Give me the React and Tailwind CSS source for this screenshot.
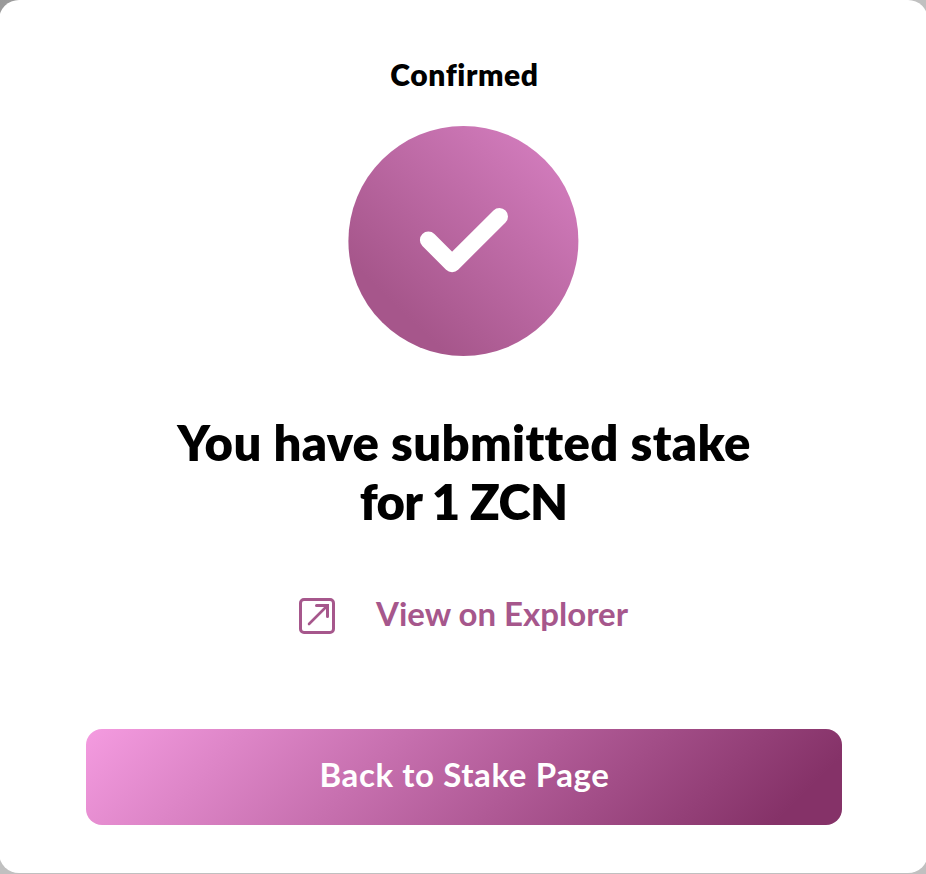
import React from "react";

const CheckBadge = () => (
	<svg className="block w-[231px] h-[230px] shrink-0" viewBox="0 0 231 230" fill="none">
		<defs>
			<linearGradient id="badge" x1="197" y1="33" x2="52" y2="184" gradientUnits="userSpaceOnUse">
				<stop stopColor="#D07ABA" />
				<stop offset="1" stopColor="#A6568B" />
			</linearGradient>
		</defs>
		<circle cx="115.4" cy="115" r="115" fill="url(#badge)" />
		<path
			d="M80.4 114L104.1 137.7L151.5 90.4"
			stroke="#fff"
			strokeWidth="17"
			strokeLinecap="round"
			strokeLinejoin="round"
		/>
	</svg>
);

const ExplorerIcon = () => (
	<svg className="block w-9 h-9 shrink-0" viewBox="0 0 36 36" fill="none" stroke="#A6578C">
		<rect x="1.5" y="1.5" width="33" height="33" rx="3.5" strokeWidth="3" />
		<path d="M10 26L28 8" strokeWidth="2.6" strokeLinecap="round" />
		<path d="M17.5 7.5H28.5V18.5" strokeWidth="3" strokeLinecap="round" />
	</svg>
);

const App = () => {
	return (
		<div className="w-[926px] h-[874px] overflow-hidden bg-[linear-gradient(135deg,#999999_0%,#c0c0c0_12%,#c0c0c0_100%)] font-['Lato',sans-serif] [font-variant-ligatures:none]">
			<div className="w-[929px] h-[873px] -ml-px rounded-[20px] bg-white flex flex-col items-center">
				<h2 className="mt-[56px] pl-[2px] h-9 leading-9 text-[30px] tracking-[0.6px] font-extrabold text-black whitespace-nowrap">
					Confirmed
				</h2>
				<div className="mt-[34px]">
					<CheckBadge />
				</div>

				<h1 className="mt-[57px] flex flex-col items-center text-[49px] leading-[59px] font-extrabold text-black whitespace-nowrap">
					<span className="pl-px tracking-[0.35px]">You have submitted stake</span>
					<span className="tracking-[-0.7px]">for 1 ZCN</span>
				</h1>

				{/* Explorer link */}
				<a className="mt-[66px] h-[38px] flex items-center gap-[41px] cursor-pointer">
					<ExplorerIcon />
					<span className="relative -top-[3px] text-[33px] leading-[38px] font-bold text-[#A6578C] whitespace-nowrap">
						View on Explorer
					</span>
				</a>

				<button className="mt-[94px] w-[756px] h-24 pb-1 pl-[2px] rounded-2xl bg-[linear-gradient(135deg,#F49BE0_0%,#B05A96_57%,#853268_92%)] text-[33px] tracking-[0.6px] font-bold text-white whitespace-nowrap cursor-pointer">
					Back to Stake Page
				</button>
			</div>
		</div>
	);
};

export default App;
